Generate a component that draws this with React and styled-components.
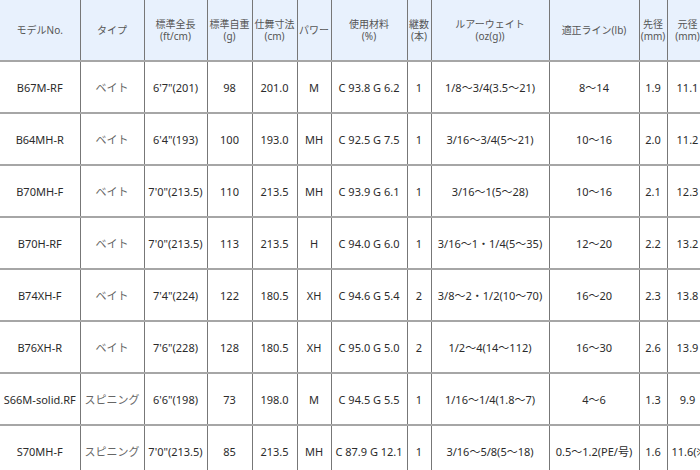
import React from 'react';
import styled, { createGlobalStyle } from 'styled-components';

const GlobalStyle = createGlobalStyle`
  html, body {
    margin: 0;
    padding: 0;
    background: #fff;
    overflow: hidden;
  }
  body {
    font-family: "Noto Sans", "Noto Sans CJK JP", sans-serif;
  }
`;

const SpecTable = styled.table`
  border-collapse: collapse;
  table-layout: fixed;
  width: 708px;
  color: #2b2b2b;
  font-size: 11px;
`;

const HeadRow = styled.tr`
  height: 61px;
  background: #e8f1fd;
`;

const HeadCell = styled.th`
  font-weight: normal;
  font-size: 10px;
  line-height: 12px;
  color: #555;
  text-align: center;
  vertical-align: middle;
  padding: 0;
  border-right: 1px solid #777;
  border-bottom: 2px solid #a6a6a6;
  white-space: pre-line;
`;

const BodyRow = styled.tr`
  height: 52px;
`;

const Cell = styled.td`
  text-align: ${(p) => (p.$left ? 'left' : 'center')};
  padding: ${(p) => (p.$left ? '0 0 0 4px' : '0')};
  vertical-align: middle;
  white-space: nowrap;
  overflow: visible;
  border-right: 1px solid #777;
  border-bottom: 2px solid #a6a6a6;
  color: ${(p) => (p.$kana ? '#666' : '#2b2b2b')};
`;

const widths = [80, 64, 63, 45, 45, 34, 76, 24, 118, 90, 28, 41];

const headers = [
  'モデルNo.',
  'タイプ',
  '標準全長\n(ft/cm)',
  '標準自重\n(g)',
  '仕舞寸法\n(cm)',
  'パワー',
  '使用材料\n(%)',
  '継数\n(本)',
  'ルアーウェイト\n(oz(g))',
  '適正ライン(lb)',
  '先径\n(mm)',
  '元径\n(mm)',
];

const rods = [
  ['B67M-RF', 'ベイト', '6\'7"(201)', '98', '201.0', 'M', 'C 93.8 G 6.2', '1', '1/8～3/4(3.5～21)', '8～14', '1.9', '11.1'],
  ['B64MH-R', 'ベイト', '6\'4"(193)', '100', '193.0', 'MH', 'C 92.5 G 7.5', '1', '3/16～3/4(5～21)', '10～16', '2.0', '11.2'],
  ['B70MH-F', 'ベイト', '7\'0"(213.5)', '110', '213.5', 'MH', 'C 93.9 G 6.1', '1', '3/16～1(5～28)', '10～16', '2.1', '12.3'],
  ['B70H-RF', 'ベイト', '7\'0"(213.5)', '113', '213.5', 'H', 'C 94.0 G 6.0', '1', '3/16～1・1/4(5～35)', '12～20', '2.2', '13.2'],
  ['B74XH-F', 'ベイト', '7\'4"(224)', '122', '180.5', 'XH', 'C 94.6 G 5.4', '2', '3/8～2・1/2(10～70)', '16～20', '2.3', '13.8'],
  ['B76XH-R', 'ベイト', '7\'6"(228)', '128', '180.5', 'XH', 'C 95.0 G 5.0', '2', '1/2～4(14～112)', '16～30', '2.6', '13.9'],
  ['S66M-solid.RF', 'スピニング', '6\'6"(198)', '73', '198.0', 'M', 'C 94.5 G 5.5', '1', '1/16～1/4(1.8～7)', '4～6', '1.3', '9.9'],
  ['S70MH-F', 'スピニング', '7\'0"(213.5)', '85', '213.5', 'MH', 'C 87.9 G 12.1', '1', '3/16～5/8(5～18)', '0.5～1.2(PE/号)', '1.6', '11.6(※)'],
];

export default function App() {
  return (
    <>
      <GlobalStyle />
      <SpecTable>
        <colgroup>
          {widths.map((w, i) => (
            <col key={i} style={{ width: w }} />
          ))}
        </colgroup>
        <thead>
          <HeadRow>
            {headers.map((h) => (
              <HeadCell key={h}>{h}</HeadCell>
            ))}
          </HeadRow>
        </thead>
        <tbody>
          {rods.map((r) => (
            <BodyRow key={r[0]}>
              {r.map((v, i) => (
                <Cell
                  key={i}
                  $kana={i === 1}
                  $left={i === 11 && v.length > 5}
                >
                  {v}
                </Cell>
              ))}
            </BodyRow>
          ))}
        </tbody>
      </SpecTable>
    </>
  );
}
